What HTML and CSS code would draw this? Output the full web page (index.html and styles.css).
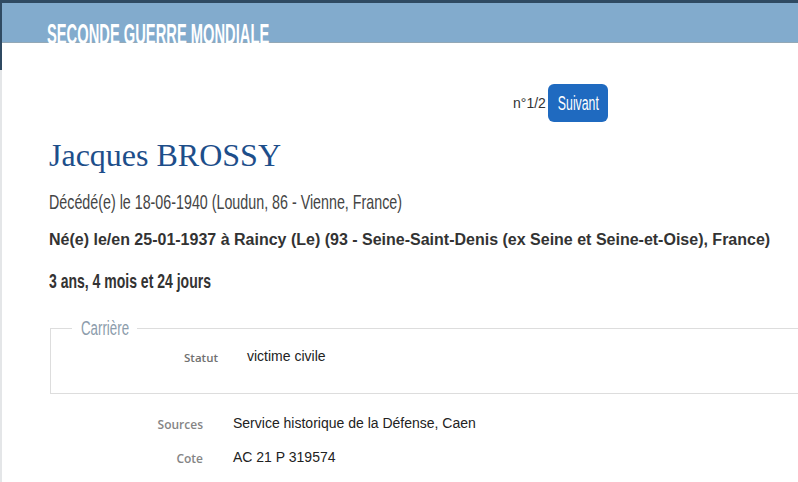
FILE: index.html
```html
<!DOCTYPE html>
<html lang="fr">
<head>
<meta charset="utf-8">
<title>Jacques BROSSY</title>
<link rel="stylesheet" href="styles.css">
</head>
<body>
<div class="topbar"></div>
<header class="band">
  <h2 class="band-title"><span class="cond cond-title">SECONDE GUERRE MONDIALE</span></h2>
</header>
<main class="content">
  <div class="pager">
    <span class="pager-num">n°1/2</span>
    <a class="btn" href="#"><span class="cond cond-btn">Suivant</span></a>
  </div>
  <h1 class="name">Jacques BROSSY</h1>
  <p class="death"><span class="cond cond-death">Décédé(e) le 18-06-1940 (Loudun, 86 - Vienne, France)</span></p>
  <p class="birth">Né(e) le/en 25-01-1937 à Raincy (Le) (93 - Seine-Saint-Denis (ex Seine et Seine-et-Oise), France)</p>
  <p class="age"><span class="cond cond-age">3 ans, 4 mois et 24 jours</span></p>
  <fieldset class="box">
    <legend class="box-legend"><span class="cond cond-legend">Carrière</span></legend>
    <div class="row row-in">
      <span class="label">Statut</span>
      <span class="value">victime civile</span>
    </div>
  </fieldset>
  <div class="row row-out first">
    <span class="label">Sources</span>
    <span class="value">Service historique de la Défense, Caen</span>
  </div>
  <div class="row row-out second">
    <span class="label">Cote</span>
    <span class="value">AC 21 P 319574</span>
  </div>
</main>
</body>
</html>
```
FILE: styles.css
```css
html, body {
  margin: 0;
  padding: 0;
}
body {
  width: 798px;
  height: 482px;
  overflow: hidden;
  background:
    linear-gradient(#2f4a62, #2f4a62) no-repeat 0 0 / 2px 70px,
    linear-gradient(#e4e6e8, #e4e6e8) no-repeat 0 0 / 2px 100%,
    #ffffff;
  font-family: "Liberation Sans", Arial, sans-serif;
  color: #333;
}

/* condensed display face (Oswald-like) emulated by horizontal scaling */
.cond {
  display: inline-block;
  white-space: nowrap;
  transform-origin: 0 50%;
}
.cond-title { transform: scaleX(0.507); }
.cond-btn { transform: scaleX(0.615); transform-origin: 50% 50%; flex: none; }
.cond-death { transform: scaleX(0.68); }
.cond-age { transform: scaleX(0.667); }
.cond-legend { transform: scaleX(0.665); }

.topbar {
  height: 3px;
  background: #2f4a62;
}
.band {
  height: 40px;
  margin-left: 2px;
  padding: 16px 0 0 45px;
  box-sizing: border-box;
  background: #82abcd;
  border-bottom: 1px solid #93a8b6;
}
.band-title {
  margin: 0;
  font-weight: bold;
  font-size: 29px;
  line-height: 30px;
  color: #fff;
  white-space: nowrap;
}
.content {
  padding-left: 49px;
}
.pager {
  display: flex;
  align-items: center;
  margin-left: 464px;
  padding-top: 41px;
}
.pager-num {
  font-size: 14px;
  line-height: 16px;
  color: #333;
  margin-right: 2px;
  margin-top: -1px;
}
.btn {
  display: flex;
  justify-content: center;
  width: 60px;
  height: 38px;
  line-height: 38px;
  background: #1f6ac0;
  color: #fff;
  border-radius: 6px;
  text-decoration: none;
  font-size: 20px;
}
.name {
  margin: 15px 0 0;
  font-family: "Liberation Serif", "DejaVu Serif", serif;
  font-weight: normal;
  font-size: 32px;
  line-height: 36px;
  color: #1d4e8a;
}
.death {
  margin: 16px 0 0;
  font-size: 21px;
  line-height: 26px;
  color: #454545;
}
.birth {
  margin: 15px 0 0;
  font-weight: bold;
  font-size: 16px;
  line-height: 20px;
  color: #333;
}
.age {
  margin: 18px 0 0;
  font-size: 21px;
  line-height: 26px;
  font-weight: bold;
  color: #333;
}
.box {
  margin: 24px 0 0 1px;
  width: 748px;
  box-sizing: border-box;
  border: 1px solid #dddddd;
  border-right: none;
  padding: 0 0 26px;
}
.box-legend {
  margin-left: 21px;
  padding: 0 8px 0 9px;
  width: 48px;
  font-size: 20px;
  line-height: 20px;
  color: #8c9cab;
}
.row {
  display: flex;
  align-items: baseline;
  line-height: 20px;
}
.label {
  text-align: right;
  font-family: "Open Sans", "DejaVu Sans", sans-serif;
  font-weight: 600;
  color: #707070;
  position: relative;
  top: 1px;
}
.value {
  font-size: 14px;
  color: #222;
}
.row-in {
  margin-top: 8px;
}
.row-in .label {
  width: 167px;
  margin-right: 29px;
  font-size: 11.5px;
}
.row-out .label {
  width: 154px;
  margin-right: 30px;
  font-size: 12px;
  color: #858585;
}
.row-out.first {
  margin-top: 19px;
}
.row-out.second {
  margin-top: 13px;
}
```
